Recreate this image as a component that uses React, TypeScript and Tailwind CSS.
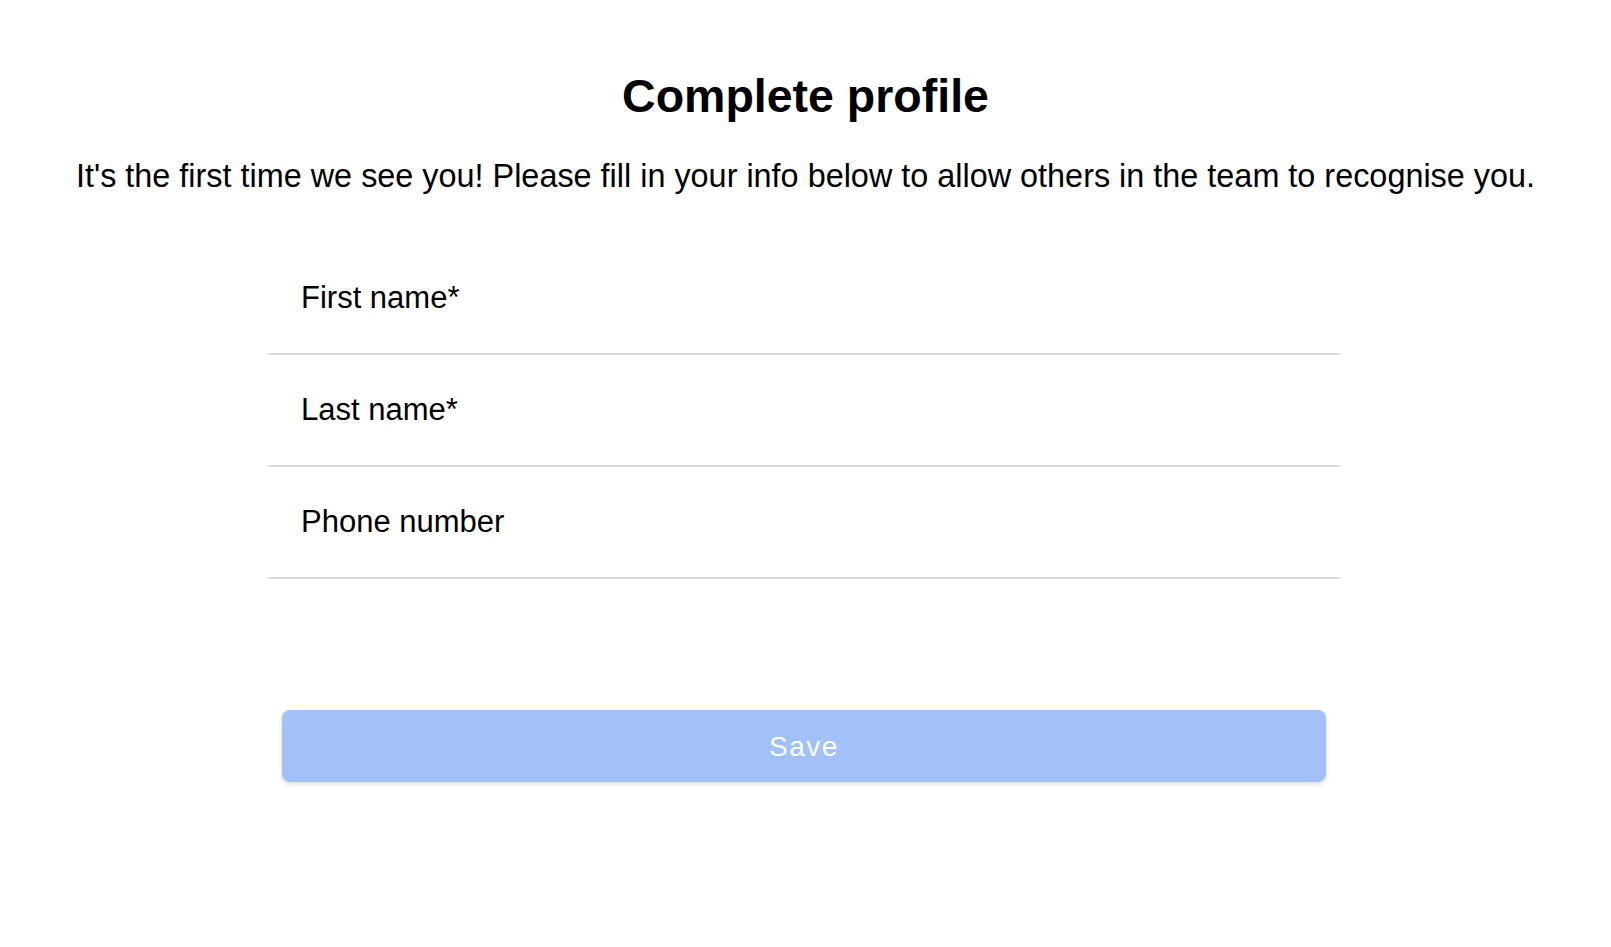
import React from 'react';

const fields = [
  { name: 'firstName', label: 'First name*' },
  { name: 'lastName', label: 'Last name*' },
  { name: 'phone', label: 'Phone number' }
];

// Profile completion form
const App = () => {
  return (
    <div className="min-h-[947px] w-full bg-white text-black font-['Liberation_Sans',Arial,sans-serif]">
      <div className="flex flex-col items-center pt-[68px]">
        <h1 className="text-[46.5px] leading-[56px] font-bold">Complete profile</h1>
        <p className="mt-[32px] text-[32.4px] leading-[40px]">
          It's the first time we see you! Please fill in your info below to allow others in the team to recognise you.
        </p>

        <form className="mt-[47px] mr-[3px] w-[1072px] flex flex-col" onSubmit={(e) => e.preventDefault()}>
          {fields.map((field) => (
            <div key={field.name} className="h-[112px] flex items-center border-b-2 border-[#dcdcdc]">
              <input
                name={field.name}
                placeholder={field.label}
                className="w-full bg-transparent pl-[33px] text-[31px] leading-[40px] outline-none placeholder:text-black"
              />
            </div>
          ))}

          <button
            type="submit"
            className="mt-[131px] mx-[14px] h-[72px] rounded-[8px] bg-[#a3c1f9] pt-[2px] text-white text-[28px] font-medium tracking-[1.5px] shadow-[0_2px_5px_rgba(0,0,0,0.15)]"
          >
            Save
          </button>
        </form>
      </div>
    </div>
  );
};

export default App;
